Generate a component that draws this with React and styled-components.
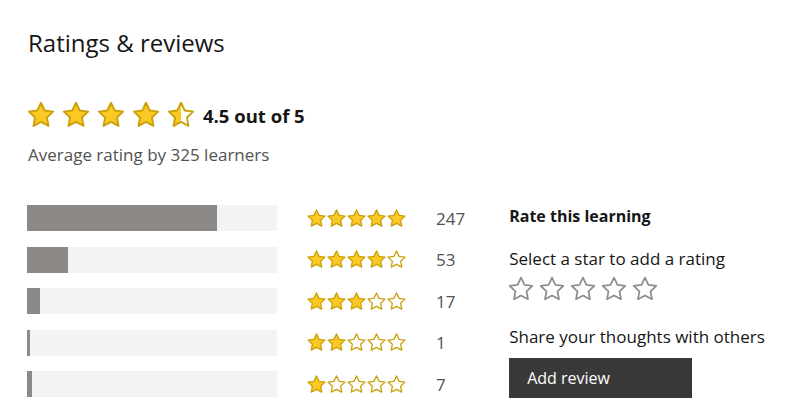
import React from 'react';
import styled, { createGlobalStyle } from 'styled-components';

const GlobalStyle = createGlobalStyle`
  body {
    margin: 0;
    background: #fff;
    font-family: 'Open Sans', 'Noto Sans', sans-serif;
    color: #161616;
  }
`;

const STAR = 'M12 2.2l2.95 6.2 6.75.9-4.95 4.7 1.25 6.75L12 17.5l-5.99 3.25 1.24-6.75L2.3 9.3l6.75-.9L12 2.2z';

const breakdown = [
  { stars: 5, count: 247 },
  { stars: 4, count: 53 },
  { stars: 3, count: 17 },
  { stars: 2, count: 1 },
  { stars: 1, count: 7 },
];
const total = 325;

function Star({ size, fill = 'full', empty = 'white', stroke = '#c9a10a' }) {
  const id = React.useId();
  return (
    <svg width={size} height={size} viewBox='0 0 24 24'>
      <defs>
        <linearGradient id={id}>
          <stop offset='50%' stopColor='#fcc924' />
          <stop offset='50%' stopColor={empty} />
        </linearGradient>
      </defs>
      <path
        d={STAR}
        fill={fill === 'full' ? '#fcc924' : fill === 'half' ? `url(#${id})` : empty}
        stroke={stroke}
        strokeWidth='1.5'
        strokeLinejoin='round'
      />
    </svg>
  );
}

export default function App() {
  return (
    <>
      <GlobalStyle />
      <Page>
        <Title>Ratings &amp; reviews</Title>
        <Summary>
          <BigStars>
            {[0, 1, 2, 3].map((i) => (
              <Star key={i} size={30} />
            ))}
            <Star size={30} fill='half' />
          </BigStars>
          <Score>4.5 out of 5</Score>
        </Summary>
        <Average>Average rating by 325 learners</Average>

        <Body>
          <Rows>
            {breakdown.map((row) => (
              <Row key={row.stars}>
                <Bar>
                  <Fill style={{ width: `${Math.max(1, (row.count / total) * 100)}%` }} />
                </Bar>
                <SmallStars>
                  {[1, 2, 3, 4, 5].map((n) => (
                    <Star key={n} size={21} fill={n <= row.stars ? 'full' : 'none'} />
                  ))}
                </SmallStars>
                <Count>{row.count}</Count>
              </Row>
            ))}
          </Rows>

          <Rate>
            <RateTitle>Rate this learning</RateTitle>
            <RateLabel>Select a star to add a rating</RateLabel>
            <RateStars>
              {[1, 2, 3, 4, 5].map((n) => (
                <Star key={n} size={28} fill='none' stroke='#8d8d8d' />
              ))}
            </RateStars>
            <RateLabel $gap={23}>Share your thoughts with others</RateLabel>
            <Button>Add review</Button>
          </Rate>
        </Body>
      </Page>
    </>
  );
}

const Page = styled.div`
  padding: 26px 28px;
`;

const Title = styled.h2`
  margin: 0;
  font-size: 24px;
  font-weight: 400;
  line-height: 34px;
`;

const Summary = styled.div`
  display: flex;
  align-items: center;
  height: 30px;
  margin-top: 40px;
`;

const BigStars = styled.div`
  display: flex;
  gap: 5px;
  margin-left: -2px;

  svg {
    display: block;
  }
`;

const Score = styled.span`
  margin-left: 7px;
  font-size: 18.5px;
  font-weight: 700;
`;

const Average = styled.p`
  margin: 14px 0 0;
  font-size: 17px;
  line-height: 22px;
  color: #525252;
`;

const Body = styled.div`
  display: flex;
  margin-top: 39px;
`;

const Rows = styled.div`
  display: flex;
  flex-direction: column;
  gap: 15.5px;
  margin-left: -1px;
`;

const Row = styled.div`
  display: flex;
  align-items: center;
  height: 26px;
`;

const Bar = styled.div`
  width: 250px;
  height: 26px;
  background: #f3f3f3;
`;

const Fill = styled.div`
  height: 100%;
  background: #8d8987;
`;

const SmallStars = styled.div`
  display: flex;
  margin-left: 29px;

  svg {
    display: block;
    margin-right: -1px;
  }
`;

const Count = styled.span`
  margin-left: 30px;
  font-size: 17px;
  color: #525252;
`;

const Rate = styled.div`
  margin-left: 44px;
  display: flex;
  flex-direction: column;
  align-items: flex-start;
`;

const RateTitle = styled.div`
  font-size: 16px;
  font-weight: 700;
  line-height: 22px;
`;

const RateLabel = styled.div`
  margin-top: ${(p) => p.$gap ?? 21}px;
  font-size: 17px;
  line-height: 22px;
`;

const RateStars = styled.div`
  display: flex;
  gap: 3px;
  margin-top: 5px;
  margin-left: -2px;

  svg {
    display: block;
  }
`;

const Button = styled.button`
  margin-top: 10px;
  width: 183px;
  height: 40px;
  padding: 0 18px;
  border: 0;
  background: #393939;
  color: #fff;
  font-family: inherit;
  font-size: 16px;
  text-align: left;
  cursor: pointer;
`;
